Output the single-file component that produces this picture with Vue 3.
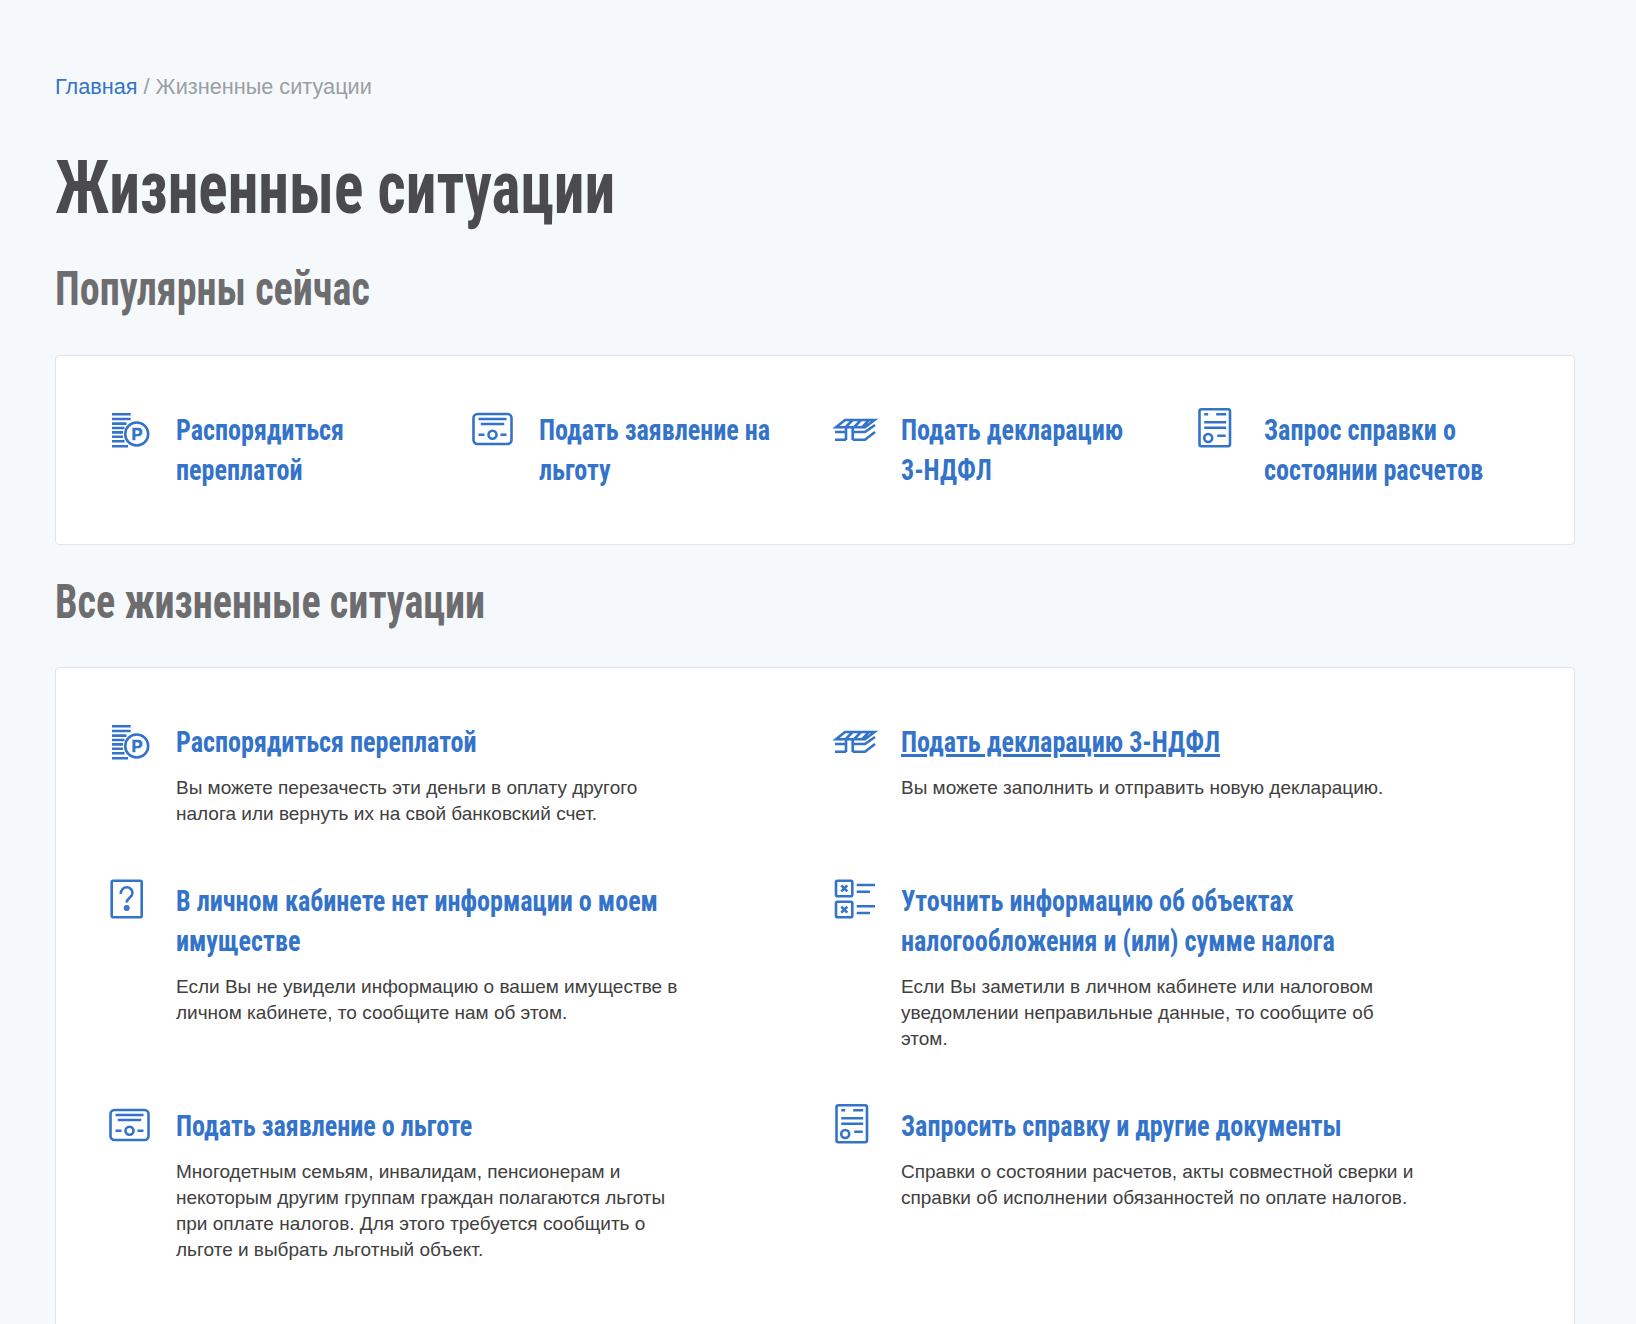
<template>
  <div class="page">
    <svg class="defs" width="0" height="0">
      <symbol id="i-coin" viewBox="0 0 44 44" overflow="visible">
        <path d="M2 4.3h18.7M2 9h18.7M2 13.6h14.5M2 18h12.5M2 22.4h11M2 26.8h11M2 31.2h12.5M2 36.3h16" />
        <circle cx="26.7" cy="24" r="11.5" />
      </symbol>
      <symbol id="i-cert" viewBox="0 0 44 44" overflow="visible">
        <rect x="0.5" y="4" width="38" height="30" rx="4" />
        <path d="M5.5 9h28M7.8 14h23.4M5.5 24.7h6M27.5 24.7h6" />
        <circle cx="19.5" cy="24.7" r="4" />
      </symbol>
      <symbol id="i-roof" viewBox="0 0 44 44" overflow="visible">
        <path d="M10 10h29.5l-9.5 7.3H1zM17.5 10l-7 7.3M26 10l-7 7.3M34 10l-7 7.3" />
        <path d="M0 22h11M17.7 22H30l10-7M0 29.7h11M17.7 29.7H30l10-7.7M11 17v13M17.7 17v13" />
      </symbol>
      <symbol id="i-doc" viewBox="0 0 44 44" overflow="visible">
        <rect x="1.5" y="-0.7" width="30.5" height="37" rx="2" />
        <path d="M6.2 4.3h4M18.2 4.3h10M6.2 12.3h22M6.2 17.7h22M19.2 25.7h8.5" />
        <circle cx="10.2" cy="28" r="4" />
      </symbol>
      <symbol id="i-question" viewBox="0 0 44 44" overflow="visible">
        <rect x="1.7" y="-0.3" width="30" height="36.6" rx="1.5" />
        <path d="M10.7 13C10.7 9 13.5 6.3 16.7 6.3C20 6.3 22.5 9 22.5 12C22.5 16.5 16.7 17 16.7 21.5" />
        <circle cx="16.7" cy="27" r="1.7" class="dot" />
      </symbol>
      <symbol id="i-check" viewBox="0 0 44 44" overflow="visible">
        <rect x="1" y="-0.3" width="16.3" height="15.6" rx="1.5" />
        <rect x="1" y="20.7" width="16.3" height="15.6" rx="1.5" />
        <path d="M6.3 4.3l6 6M12.3 4.3l-6 6M6.3 25.7l6 6M12.3 25.7l-6 6" class="bold" />
        <path d="M21.7 4H40M21.7 10.7H35M21.7 25.3H40M21.7 32H35" />
      </symbol>
    </svg>

    <div class="crumbs"><a href="#" class="crumb-link">Главная</a><span> / Жизненные ситуации</span></div>
    <h1 class="title">Жизненные ситуации</h1>

    <h2 class="subtitle">Популярны сейчас</h2>
    <section class="card popular">
      <a v-for="p in popular" :key="p.text" href="#" class="pop-item">
        <svg class="icon">
          <use :href="'#i-' + p.icon" />
          <text v-if="p.icon === 'coin'" x="26.9" y="29.7" text-anchor="middle" class="glyph">P</text>
        </svg>
        <span class="item-title">{{ p.text }}</span>
      </a>
    </section>

    <h2 class="subtitle">Все жизненные ситуации</h2>
    <section class="card all">
      <div v-for="s in situations" :key="s.title" class="sit-item">
        <svg class="icon">
          <use :href="'#i-' + s.icon" />
          <text v-if="s.icon === 'coin'" x="26.9" y="29.7" text-anchor="middle" class="glyph">P</text>
        </svg>
        <div class="sit-body">
          <a href="#" class="item-title" :class="{ hovered: s.hovered }">{{ s.title }}</a>
          <p class="sit-text">{{ s.text }}</p>
        </div>
      </div>
    </section>
  </div>
</template>

<script setup>
const popular = [
  { icon: "coin", text: "Распорядиться переплатой" },
  { icon: "cert", text: "Подать заявление на льготу" },
  { icon: "roof", text: "Подать декларацию 3-НДФЛ" },
  { icon: "doc", text: "Запрос справки о состоянии расчетов" },
];

const situations = [
  {
    icon: "coin",
    title: "Распорядиться переплатой",
    text: "Вы можете перезачесть эти деньги в оплату другого налога или вернуть их на свой банковский счет.",
  },
  {
    icon: "roof",
    title: "Подать декларацию 3-НДФЛ",
    text: "Вы можете заполнить и отправить новую декларацию.",
    hovered: true,
  },
  {
    icon: "question",
    title: "В личном кабинете нет информации о моем имуществе",
    text: "Если Вы не увидели информацию о вашем имуществе в личном кабинете, то сообщите нам об этом.",
  },
  {
    icon: "check",
    title: "Уточнить информацию об объектах налогообложения и (или) сумме налога",
    text: "Если Вы заметили в личном кабинете или налоговом уведомлении неправильные данные, то сообщите об этом.",
  },
  {
    icon: "cert",
    title: "Подать заявление о льготе",
    text: "Многодетным семьям, инвалидам, пенсионерам и некоторым другим группам граждан полагаются льготы при оплате налогов. Для этого требуется сообщить о льготе и выбрать льготный объект.",
  },
  {
    icon: "doc",
    title: "Запросить справку и другие документы",
    text: "Справки о состоянии расчетов, акты совместной сверки и справки об исполнении обязанностей по оплате налогов.",
  },
];
</script>

<style>
html,
body {
  background: #f6f9fc;
}
</style>

<style scoped>
.page {
  height: 1324px;
  overflow: hidden;
  box-sizing: border-box;
  padding: 75px 61px 0 55px;
  font-family: "Liberation Sans", Arial, sans-serif;
  background: #f6f9fc;
}
.defs {
  position: absolute;
}
.crumbs {
  font-size: 21.7px;
  line-height: 24px;
  color: #9a9ea5;
}
.crumb-link {
  color: #3373c9;
  text-decoration: none;
}
/* заголовки узкие: Roboto на минимальной ширине + сжатие по X */
.title,
.subtitle,
.item-title {
  font-family: Roboto, "Liberation Sans", sans-serif;
  font-weight: 700;
  font-stretch: 75%;
  transform-origin: left center;
  white-space: nowrap;
}
.title {
  margin: 49px 0 0;
  font-size: 74px;
  line-height: 80px;
  color: #4b4b4d;
  transform: scaleX(0.83);
}
.subtitle {
  margin: 33px 0 0;
  font-size: 48px;
  line-height: 56px;
  color: #6d6d70;
  transform: scaleX(0.836);
}
.popular + .subtitle {
  margin-top: 29px;
}
.card {
  margin-top: 38px;
  box-sizing: border-box;
  background: #fff;
  border: 1px solid #e1e4e8;
  border-radius: 4px;
}
.popular {
  height: 190px;
  padding: 54px 54px 0;
  display: grid;
  grid-template-columns: repeat(4, minmax(0, 1fr));
  column-gap: 40px;
}
.all {
  margin-top: 37px;
  padding: 54px 54px 120px;
  display: grid;
  grid-template-columns: repeat(2, minmax(0, 1fr));
  column-gap: 40px;
  row-gap: 54px;
}
.pop-item,
.sit-item {
  display: flex;
  align-items: flex-start;
  text-decoration: none;
}
.icon {
  flex: none;
  width: 44px;
  height: 44px;
  margin-right: 22px;
  overflow: visible;
  fill: none;
  stroke: #3373c9;
  stroke-width: 2.6;
}
.glyph {
  fill: #3373c9;
  stroke: #3373c9;
  stroke-width: 0.5;
  font: 700 16.5px "Liberation Sans", sans-serif;
}
.icon :deep(.dot) {
  fill: #3373c9;
  stroke: none;
}
.icon :deep(.bold) {
  stroke-width: 3.2;
}
.item-title {
  display: block;
  flex: none;
  width: calc(240px / 0.87);
  white-space: normal;
  font-size: 30px;
  line-height: 40px;
  color: #3373c9;
  text-decoration: none;
  transform: scaleX(0.87);
}
.sit-body .item-title {
  width: calc(100% / 0.87);
}
.item-title.hovered {
  text-decoration: underline;
}
.sit-body {
  width: 515px;
}
.sit-text {
  margin: 13px 0 0;
  font-size: 19px;
  line-height: 26px;
  color: #404040;
}
</style>
